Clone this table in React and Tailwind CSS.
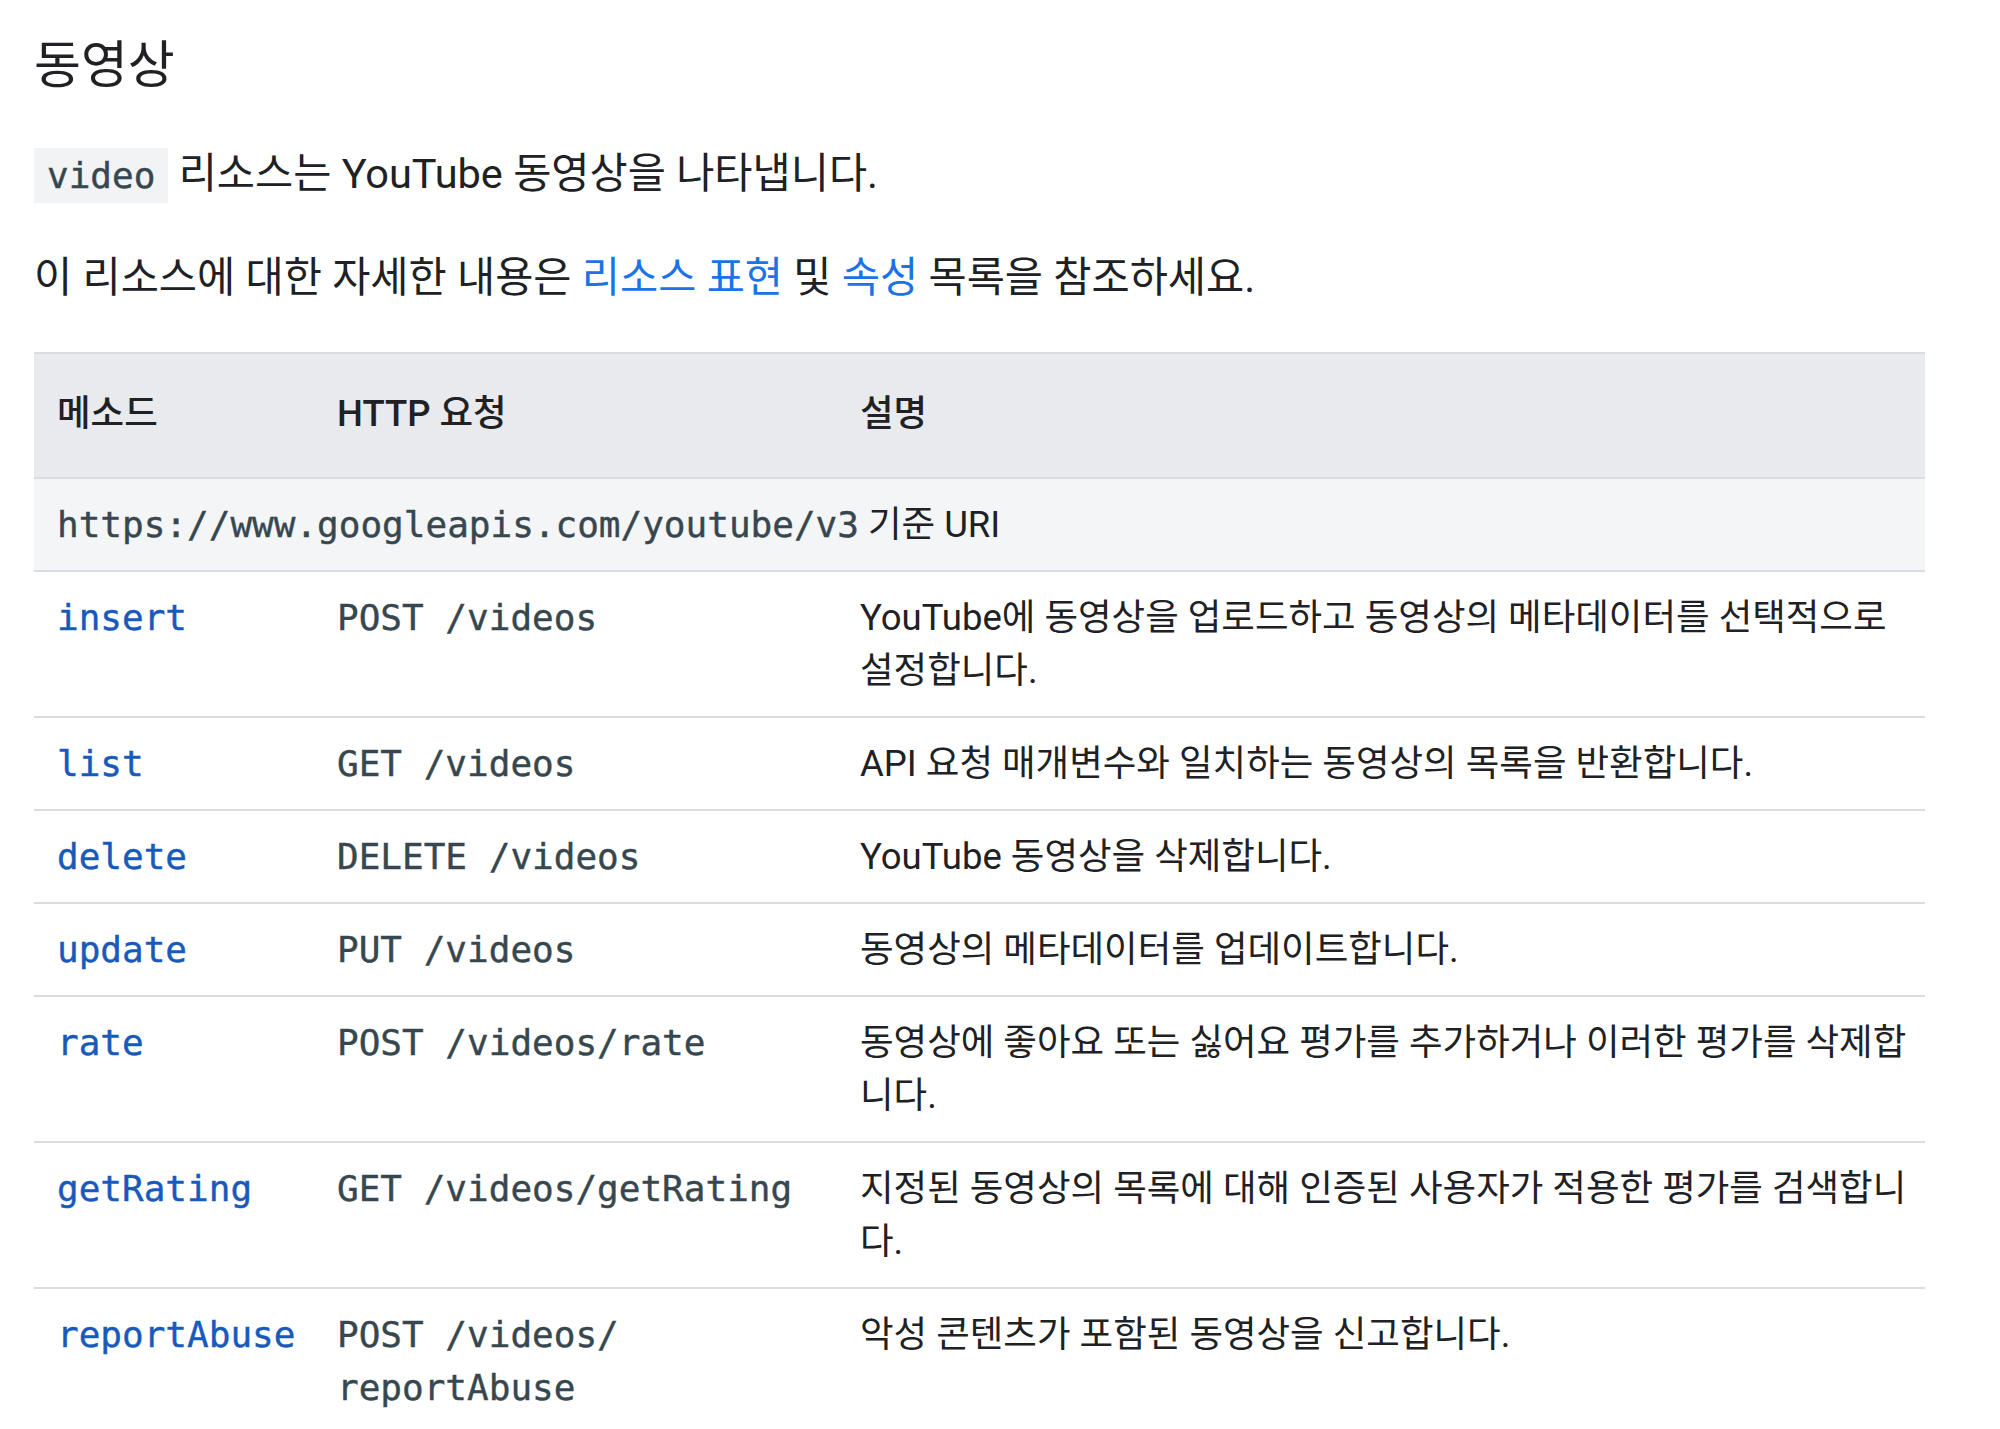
const methods = [
    {
        name: "insert",
        http: ["POST /videos"],
        desc: "YouTube에 동영상을 업로드하고 동영상의 메타데이터를 선택적으로 설정합니다.",
    },
    {
        name: "list",
        http: ["GET /videos"],
        desc: "API 요청 매개변수와 일치하는 동영상의 목록을 반환합니다.",
    },
    {
        name: "delete",
        http: ["DELETE /videos"],
        desc: "YouTube 동영상을 삭제합니다.",
    },
    {
        name: "update",
        http: ["PUT /videos"],
        desc: "동영상의 메타데이터를 업데이트합니다.",
    },
    {
        name: "rate",
        http: ["POST /videos/rate"],
        desc: "동영상에 좋아요 또는 싫어요 평가를 추가하거나 이러한 평가를 삭제합니다.",
    },
    {
        name: "getRating",
        http: ["GET /videos/getRating"],
        desc: "지정된 동영상의 목록에 대해 인증된 사용자가 적용한 평가를 검색합니다.",
    },
    {
        name: "reportAbuse",
        // 슬래시 뒤에서 줄바꿈
        http: ["POST /videos/", "reportAbuse"],
        desc: "악성 콘텐츠가 포함된 동영상을 신고합니다.",
    },
];

const mono = "font-['DejaVu_Sans_Mono',monospace] text-[36px] leading-none [-webkit-text-stroke:0.4px]";
const cell = "pl-[23px] pt-[19px] pb-[19px]";

const App = () => {
    return (
        <div className="min-h-screen bg-white px-[34px] pt-[36px] pb-[60px] font-['Roboto','Noto_Sans_CJK_KR',sans-serif] text-[#202124]">
            <h2 className="text-[51px] leading-[60px] font-normal">동영상</h2>

            <p className="mt-[48px] text-[41.5px] leading-[60px]">
                <code className="inline-block bg-[#f1f3f4] px-[13px] text-[#37474f] font-['DejaVu_Sans_Mono',monospace] text-[36px] leading-[55px] [-webkit-text-stroke:0.4px]">video</code>{" "}
                리소스는 YouTube 동영상을 나타냅니다.
            </p>

            <p className="mt-[44px] text-[41.5px] leading-[60px]">
                이 리소스에 대한 자세한 내용은{" "}
                <a href="#" className="text-[#1a73e8]">리소스 표현</a> 및{" "}
                <a href="#" className="text-[#1a73e8]">속성</a> 목록을 참조하세요.
            </p>

            {/* 메소드 목록 */}
            <table className="mt-[44px] w-[1891px] table-fixed border-collapse text-[36.5px] leading-[53px]">
                <colgroup>
                    <col className="w-[280px]" />
                    <col className="w-[523px]" />
                    <col />
                </colgroup>
                <thead>
                    <tr className="bg-[#e8eaed] border-t-2 border-[#dadce0]">
                        <th className="pl-[23px] pr-[19px] pt-[33px] pb-[37px] text-left font-medium">메소드</th>
                        <th className="pl-[23px] pr-[19px] pt-[33px] pb-[37px] text-left font-medium">HTTP 요청</th>
                        <th className="pl-[23px] pr-[10px] pt-[33px] pb-[37px] text-left font-medium">설명</th>
                    </tr>
                </thead>
                <tbody>
                    <tr className="bg-[#f4f5f6] border-t-2 border-[#dadce0]">
                        <td colSpan={3} className={`${cell} pr-[10px]`}>
                            <code className={`${mono} text-[#37474f]`}>https://www.googleapis.com/youtube/v3</code> 기준 URI
                        </td>
                    </tr>
                    {methods.map((m) => (
                        <tr key={m.name} className="border-t-2 border-[#dadce0] align-top">
                            <td className={`${cell} pr-[19px]`}>
                                <a href="#" className={`${mono} text-[#185abc]`}>{m.name}</a>
                            </td>
                            <td className={`${cell} pr-[19px]`}>
                                <code className={`${mono} text-[#37474f]`}>
                                    {m.http[0]}
                                    {m.http[1] && (
                                        <>
                                            <wbr />
                                            {m.http[1]}
                                        </>
                                    )}
                                </code>
                            </td>
                            <td className={`${cell} pr-[10px]`}>{m.desc}</td>
                        </tr>
                    ))}
                </tbody>
            </table>
        </div>
    );
};

export default App;
